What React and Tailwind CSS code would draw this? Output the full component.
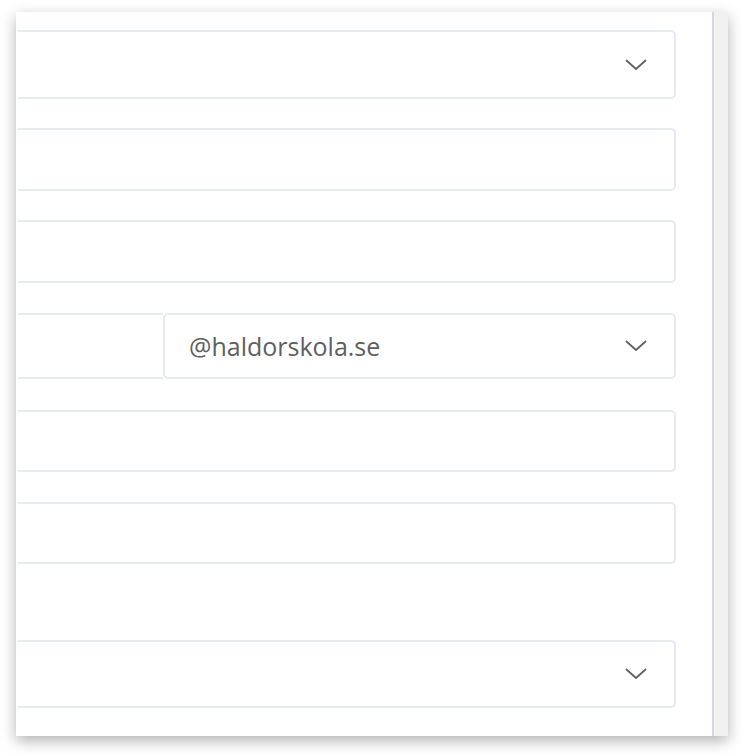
import React from "react";

function Chevron() {
  return (
    <svg width="22" height="12" viewBox="0 0 22 12" fill="none" className="shrink-0">
      <path d="M1.5 1.5 L11 10 L20.5 1.5" stroke="#626262" strokeWidth="1.8" strokeLinecap="round" strokeLinejoin="round" />
    </svg>
  );
}

function Field({ className = "", select = false, children }) {
  return (
    <div
      className={`flex items-center rounded-[5px] border-2 border-[#e7eaee] bg-white -ml-4 ${className}`}
    >
      <div className="flex-1 pl-[22px] text-[25px] text-[#5f5f5f]">{children}</div>
      {select && (
        <div className="pr-[27px]">
          <Chevron />
        </div>
      )}
    </div>
  );
}

export default function App() {
  return (
    <div className="min-h-screen bg-white" style={{ fontFamily: '"Open Sans", "Noto Sans", sans-serif' }}>
      <div className="pl-[16px] pt-[12px]">
        <div className="flex h-[724px] w-[712px] bg-white shadow-[0_5px_14px_rgba(0,0,0,0.3)]">
          <div className="flex-1 overflow-hidden pl-[2px]">
            <div className="flex flex-col overflow-hidden pr-[36px]">
              <Field select className="mt-[18px] h-[69px]" />
              <Field className="mt-[29px] h-[63px]" />
              <Field className="mt-[29px] h-[63px]" />
              <div className="mt-[30px] flex h-[66px] -ml-4">
                <div className="w-[161px] rounded-l-[5px] border-2 border-r-0 border-[#e7eaee]" />
                <div className="flex flex-1 items-center rounded-[5px] border-2 border-[#e7eaee] bg-white">
                  <div className="flex-1 pl-[24px] text-[25px] leading-none text-[#5f5f5f]">@haldorskola.se</div>
                  <div className="pr-[27px]">
                    <Chevron />
                  </div>
                </div>
              </div>
              <Field className="mt-[31px] h-[62px]" />
              <Field className="mt-[30px] h-[62px]" />
              <Field select className="mt-[76px] h-[68px]" />
            </div>
          </div>
          <div className="w-[16px] border-l-2 border-[#d4d8de] bg-[#f1f1f1]" />
        </div>
      </div>
    </div>
  );
}
